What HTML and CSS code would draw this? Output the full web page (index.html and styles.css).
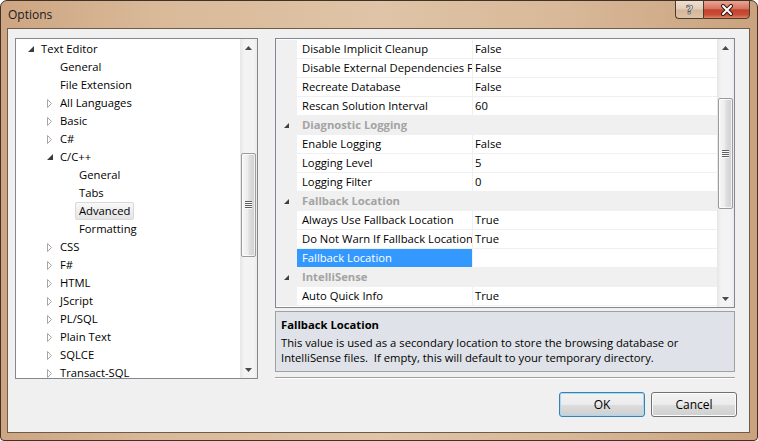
FILE: index.html
```html
<!DOCTYPE html>
<html>
<head>
<meta charset="utf-8">
<title>Options</title>
<link rel="stylesheet" href="styles.css">
</head>
<body>
<div class="window">
  <div class="titlebar">
    <span class="title">Options</span>
    <div class="caption">
      <div class="cbtn help"><span class="qmark">?</span></div>
      <div class="cbtn close">
        <svg width="14" height="12" viewBox="0 0 14 12"><path d="M3 2 L11 10 M11 2 L3 10" stroke="#3a1a12" stroke-width="4" stroke-linecap="round" fill="none"/><path d="M3 2 L11 10 M11 2 L3 10" stroke="#ffffff" stroke-width="2" stroke-linecap="round" fill="none"/></svg>
      </div>
    </div>
  </div>
  <div class="client">
    <div class="main">
      <div class="tree">
        <div class="tree-items">
          <div class="node l0"><span class="tw"><svg class="exp" width="6" height="6" viewBox="0 0 6 6"><polygon points="6,0 6,6 0,6"/></svg></span><span class="lbl">Text Editor</span></div>
          <div class="node l1"><span class="tw"></span><span class="lbl">General</span></div>
          <div class="node l1"><span class="tw"></span><span class="lbl">File Extension</span></div>
          <div class="node l1"><span class="tw"><svg class="col" width="6" height="9" viewBox="0 0 6 9"><polygon points="0.5,0.5 4.5,4.5 0.5,8.5"/></svg></span><span class="lbl">All Languages</span></div>
          <div class="node l1"><span class="tw"><svg class="col" width="6" height="9" viewBox="0 0 6 9"><polygon points="0.5,0.5 4.5,4.5 0.5,8.5"/></svg></span><span class="lbl">Basic</span></div>
          <div class="node l1"><span class="tw"><svg class="col" width="6" height="9" viewBox="0 0 6 9"><polygon points="0.5,0.5 4.5,4.5 0.5,8.5"/></svg></span><span class="lbl">C#</span></div>
          <div class="node l1"><span class="tw"><svg class="exp" width="6" height="6" viewBox="0 0 6 6"><polygon points="6,0 6,6 0,6"/></svg></span><span class="lbl">C/C++</span></div>
          <div class="node l2"><span class="tw"></span><span class="lbl">General</span></div>
          <div class="node l2"><span class="tw"></span><span class="lbl">Tabs</span></div>
          <div class="node l2"><span class="tw"></span><span class="lbl sel">Advanced</span></div>
          <div class="node l2"><span class="tw"></span><span class="lbl">Formatting</span></div>
          <div class="node l1"><span class="tw"><svg class="col" width="6" height="9" viewBox="0 0 6 9"><polygon points="0.5,0.5 4.5,4.5 0.5,8.5"/></svg></span><span class="lbl">CSS</span></div>
          <div class="node l1"><span class="tw"><svg class="col" width="6" height="9" viewBox="0 0 6 9"><polygon points="0.5,0.5 4.5,4.5 0.5,8.5"/></svg></span><span class="lbl">F#</span></div>
          <div class="node l1"><span class="tw"><svg class="col" width="6" height="9" viewBox="0 0 6 9"><polygon points="0.5,0.5 4.5,4.5 0.5,8.5"/></svg></span><span class="lbl">HTML</span></div>
          <div class="node l1"><span class="tw"><svg class="col" width="6" height="9" viewBox="0 0 6 9"><polygon points="0.5,0.5 4.5,4.5 0.5,8.5"/></svg></span><span class="lbl">JScript</span></div>
          <div class="node l1"><span class="tw"><svg class="col" width="6" height="9" viewBox="0 0 6 9"><polygon points="0.5,0.5 4.5,4.5 0.5,8.5"/></svg></span><span class="lbl">PL/SQL</span></div>
          <div class="node l1"><span class="tw"><svg class="col" width="6" height="9" viewBox="0 0 6 9"><polygon points="0.5,0.5 4.5,4.5 0.5,8.5"/></svg></span><span class="lbl">Plain Text</span></div>
          <div class="node l1"><span class="tw"><svg class="col" width="6" height="9" viewBox="0 0 6 9"><polygon points="0.5,0.5 4.5,4.5 0.5,8.5"/></svg></span><span class="lbl">SQLCE</span></div>
          <div class="node l1"><span class="tw"><svg class="col" width="6" height="9" viewBox="0 0 6 9"><polygon points="0.5,0.5 4.5,4.5 0.5,8.5"/></svg></span><span class="lbl">Transact-SQL</span></div>
        </div>
        <div class="vscroll">
          <div class="sb-btn"><svg width="7" height="4" viewBox="0 0 7 4"><polygon points="3.5,0 7,4 0,4"/></svg></div>
          <div class="sb-track"><div class="thumb tree-thumb"><div class="grip"></div></div></div>
          <div class="sb-btn"><svg width="7" height="4" viewBox="0 0 7 4"><polygon points="0,0 7,0 3.5,4"/></svg></div>
        </div>
      </div>
      <div class="right">
        <div class="grid">
          <div class="grid-rows">
            <div class="prow"><span class="gut"></span><span class="pname">Disable Implicit Cleanup</span><span class="pval">False</span></div>
            <div class="prow"><span class="gut"></span><span class="pname">Disable External Dependencies Folders</span><span class="pval">False</span></div>
            <div class="prow"><span class="gut"></span><span class="pname">Recreate Database</span><span class="pval">False</span></div>
            <div class="prow"><span class="gut"></span><span class="pname">Rescan Solution Interval</span><span class="pval">60</span></div>
            <div class="prow cat"><span class="gut"><svg width="5" height="5" viewBox="0 0 5 5"><polygon points="5,0 5,5 0,5"/></svg></span><span class="clabel">Diagnostic Logging</span></div>
            <div class="prow"><span class="gut"></span><span class="pname">Enable Logging</span><span class="pval">False</span></div>
            <div class="prow"><span class="gut"></span><span class="pname">Logging Level</span><span class="pval">5</span></div>
            <div class="prow"><span class="gut"></span><span class="pname">Logging Filter</span><span class="pval">0</span></div>
            <div class="prow cat"><span class="gut"><svg width="5" height="5" viewBox="0 0 5 5"><polygon points="5,0 5,5 0,5"/></svg></span><span class="clabel">Fallback Location</span></div>
            <div class="prow"><span class="gut"></span><span class="pname">Always Use Fallback Location</span><span class="pval">True</span></div>
            <div class="prow"><span class="gut"></span><span class="pname">Do Not Warn If Fallback Location Is Not Local</span><span class="pval">True</span></div>
            <div class="prow"><span class="gut"></span><span class="pname selected">Fallback Location</span><span class="pval"></span></div>
            <div class="prow cat"><span class="gut"><svg width="5" height="5" viewBox="0 0 5 5"><polygon points="5,0 5,5 0,5"/></svg></span><span class="clabel">IntelliSense</span></div>
            <div class="prow"><span class="gut"></span><span class="pname">Auto Quick Info</span><span class="pval">True</span></div>
          </div>
          <div class="vscroll">
            <div class="sb-btn"><svg width="7" height="4" viewBox="0 0 7 4"><polygon points="3.5,0 7,4 0,4"/></svg></div>
            <div class="sb-track"><div class="thumb grid-thumb"><div class="grip"></div></div></div>
            <div class="sb-btn"><svg width="7" height="4" viewBox="0 0 7 4"><polygon points="0,0 7,0 3.5,4"/></svg></div>
          </div>
        </div>
        <div class="desc">
          <div class="desc-title">Fallback Location</div>
          <div class="desc-text">This value is used as a secondary location to store the browsing database or<br>IntelliSense files.&nbsp; If empty, this will default to your temporary directory.</div>
        </div>
        <div class="sep"></div>
      </div>
    </div>
    <div class="buttons">
      <button class="btn default">OK</button>
      <button class="btn">Cancel</button>
    </div>
  </div>
</div>
</body>
</html>
```

FILE: styles.css
```css
html, body {
  margin: 0;
  padding: 0;
  background: #ffffff;
}

body {
  font-family: "Open Sans", "Noto Sans", sans-serif;
  font-size: 11.25px;
  color: #000;
}

.window {
  width: 758px;
  height: 441px;
  box-sizing: border-box;
  border: 1px solid #3f3226;
  border-radius: 7px 7px 4px 4px;
  background: linear-gradient(90deg, #cda582 0%, #d9b998 20%, #dfc4a7 50%, #d8b898 75%, #caa27e 100%);
  display: flex;
  flex-direction: column;
  overflow: hidden;
}

.titlebar {
  height: 27px;
  flex: none;
  display: flex;
  align-items: flex-start;
  padding: 0 7px;
}

.title {
  line-height: 28px;
  font-size: 12px;
  color: #1a1a1a;
}

.caption {
  margin-left: auto;
  margin-top: -1px;
  display: flex;
}

.cbtn {
  height: 19px;
  box-sizing: border-box;
  border: 1px solid #4a3b2e;
  display: flex;
  align-items: center;
  justify-content: center;
}

.help {
  width: 28px;
  border-right: none;
  border-radius: 0 0 0 4px;
  background: linear-gradient(#efe0d2, #e2ccb6 48%, #d4b799 52%, #dcc2a7);
}

.qmark {
  font-family: "DejaVu Sans", sans-serif;
  font-weight: bold;
  font-size: 13px;
  line-height: 16px;
  color: #ececec;
  -webkit-text-stroke: 0.6px #3c3c3c;
}

.close {
  width: 47px;
  border-radius: 0 0 4px 0;
  background: linear-gradient(#e9a693, #d7735f 45%, #c2432d 52%, #c84d36 80%, #dd8467);
}

.client {
  flex: 1;
  margin: 0 7px 7px 6px;
  border: 1px solid #6e5c4a;
  background: #f0f0f0;
  padding: 9px 12px 0 7px;
  display: flex;
  flex-direction: column;
}

.main {
  display: flex;
  gap: 17px;
  height: 341px;
  flex: none;
}

/* Tree */
.tree {
  width: 243px;
  flex: none;
  box-sizing: border-box;
  border: 1px solid #828790;
  background: #fff;
  display: flex;
}

.tree-items {
  flex: 1;
  padding-top: 1px;
  overflow: hidden;
}

.node {
  height: 18px;
  display: flex;
  align-items: center;
  white-space: nowrap;
}

.node.l0 { padding-left: 9px; }
.node.l1 { padding-left: 28px; }
.node.l2 { padding-left: 47px; }

.tw {
  width: 16px;
  flex: none;
  display: flex;
  align-items: center;
  padding-left: 3px;
  box-sizing: border-box;
}

.exp polygon { fill: #3c3c3c; }
.col polygon { fill: #fff; stroke: #a6a6a6; stroke-width: 1; }

.lbl {
  margin-left: -4px;
  padding: 0 3px;
  border: 1px solid transparent;
  line-height: 16px;
}

.lbl.sel {
  border-color: #d9d9d9;
  border-radius: 2px;
  background: linear-gradient(#f8f8f8, #e5e5e5);
}

/* Scrollbars */
.vscroll {
  width: 17px;
  flex: none;
  display: flex;
  flex-direction: column;
  background: linear-gradient(90deg, #e6e6e6, #f3f3f3 25%, #f3f3f3 80%, #ebebeb);
}

.sb-btn {
  height: 17px;
  flex: none;
  display: flex;
  align-items: center;
  justify-content: center;
}

.sb-btn polygon { fill: #4a4a4a; }

.sb-track {
  flex: 1;
}

.thumb {
  margin: 0 1px;
  box-sizing: border-box;
  border: 1px solid #9b9b9b;
  border-radius: 2px;
  background: linear-gradient(90deg, #f7f7f7, #ececec 45%, #dedede 55%, #d0d0d0);
  box-shadow: inset 0 0 0 1px rgba(255, 255, 255, 0.7);
  display: flex;
  align-items: center;
  justify-content: center;
}

.tree-thumb { margin-top: 97px; height: 104px; }
.grid-thumb { margin-top: 42px; height: 111px; }

.grip {
  width: 7px;
  height: 8px;
  background: repeating-linear-gradient(#5e5e5e 0 1px, #fafafa 1px 2px);
}

/* Right column */
.right {
  width: 460px;
  flex: none;
  display: flex;
  flex-direction: column;
}

.grid {
  height: 270px;
  flex: none;
  box-sizing: border-box;
  border: 1px solid #828790;
  background: #fff;
  display: flex;
}

.grid-rows {
  flex: 1;
  padding-top: 1px;
  overflow: hidden;
}

.prow {
  display: flex;
  height: 19px;
  box-sizing: border-box;
  border-bottom: 1px solid #f0f0f0;
}

.gut {
  width: 21px;
  flex: none;
  background: #f0f0f0;
  display: flex;
  align-items: center;
  padding-left: 8px;
  box-sizing: border-box;
}

.gut polygon { fill: #404040; }

.pname {
  width: 176px;
  flex: none;
  box-sizing: border-box;
  padding-left: 5px;
  border-right: 1px solid #f0f0f0;
  white-space: nowrap;
  overflow: hidden;
  line-height: 18px;
}

.pname.selected {
  background: #3399ff;
  color: #fff;
}

.pval {
  flex: 1;
  padding-left: 2px;
  line-height: 18px;
  white-space: nowrap;
}

.prow.cat {
  background: #f0f0f0;
}

.clabel {
  padding-left: 5px;
  font-weight: bold;
  color: #a3a3a3;
  line-height: 18px;
}

.desc {
  margin-top: 3px;
  height: 61px;
  flex: none;
  box-sizing: border-box;
  border: 1px solid #a0a0a0;
  background: #dfe2e8;
  padding: 5px 5px 0;
  line-height: 15px;
}

.desc-title {
  font-weight: bold;
  margin-bottom: 3px;
}

.sep {
  margin-top: 5px;
  height: 0;
  border-top: 1px solid #a0a0a0;
  border-bottom: 1px solid #ffffff;
}

/* Buttons */
.buttons {
  display: flex;
  justify-content: flex-end;
  gap: 6px;
  margin-top: 13px;
}

.btn {
  width: 86px;
  height: 25px;
  box-sizing: border-box;
  border: 1px solid #707070;
  border-radius: 3px;
  background: linear-gradient(#f2f2f2 0%, #ebebeb 50%, #dddddd 50%, #cfcfcf 100%);
  box-shadow: inset 0 0 0 1px #fcfcfc;
  font-family: inherit;
  font-size: 12px;
  color: #000;
  padding: 0;
}

.btn.default {
  border-color: #3c7fb1;
  box-shadow: inset 0 0 0 1px #a6d9f4;
}
```
